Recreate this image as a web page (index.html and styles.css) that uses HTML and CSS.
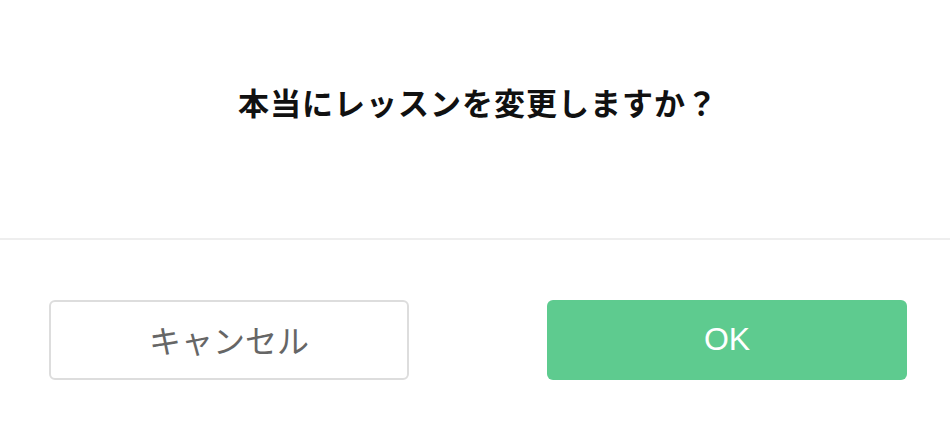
FILE: index.html
```html
<!DOCTYPE html>
<html lang="ja">
<head>
  <meta charset="UTF-8">
  <meta name="viewport" content="width=device-width, initial-scale=1.0">
  <title>レッスン変更</title>
  <link rel="stylesheet" href="styles.css">
</head>
<body>
  <div class="dialog">
    <div class="dialog-body">
      <p class="message">本当にレッスンを変更しますか？</p>
    </div>
    <div class="dialog-footer">
      <button class="btn btn-cancel">キャンセル</button>
      <button class="btn btn-ok">OK</button>
    </div>
  </div>
</body>
</html>
```

FILE: styles.css
```css
body {
  font-family: "Liberation Sans", "Noto Sans CJK JP", sans-serif;
  margin: 0;
  padding: 0;
  background: #fff;
}
.dialog {
  width: 950px;
}
.dialog-body {
  height: 238px;
  box-sizing: border-box;
  padding-top: 86px;
  text-align: center;
}
.message {
  margin: 0;
  padding-left: 6px;
  font-size: 31px;
  font-weight: bold;
  letter-spacing: 1px;
  line-height: 38px;
  color: #111;
}
.dialog-footer {
  border-top: 2px solid #eeeeee;
  display: flex;
  justify-content: space-between;
  padding: 60px 43px 48px 49px;
}
.btn {
  width: 360px;
  height: 80px;
  border-radius: 6px;
  font-family: "Liberation Sans", "Noto Sans CJK JP", sans-serif;
  font-size: 32px;
  cursor: pointer;
}
.btn-cancel {
  background: #fff;
  border: 2px solid #dddddd;
  color: #666;
  padding-bottom: 3px;
}
.btn-ok {
  background: #5ecb8f;
  border: none;
  color: #fff;
  padding-bottom: 3px;
}
```
